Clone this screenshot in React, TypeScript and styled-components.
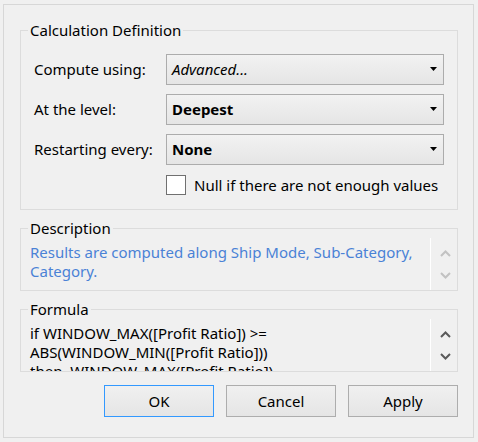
import styled, { createGlobalStyle } from "styled-components";

const GlobalStyle = createGlobalStyle`
  html, body {
    margin: 0;
    padding: 0;
    background: #f0f0f0;
  }
  body {
    font-family: "Noto Sans", "Open Sans", sans-serif;
    font-size: 15px;
    color: #000;
  }
`;

const Page = styled.div`
  width: 478px;
  height: 442px;
  padding: 4px 0 0 3px;
  box-sizing: border-box;
`;

const Dialog = styled.div`
  width: 471px;
  height: 434px;
  box-sizing: border-box;
  border: 1px solid #d7d7d7;
  padding: 15px 15px 0 16px;
  display: flex;
  flex-direction: column;
`;

const Group = styled.fieldset<{ $gap?: number }>`
  margin: ${(p) => p.$gap ?? 0}px 0 0 0;
  padding: 0;
  border: 1px solid #dcdcdc;
  min-width: 0;
`;

const Legend = styled.legend`
  margin-left: 7px;
  padding: 0 2px;
  font-size: 15px;
  line-height: 20px;
  color: #000;
`;

const CalcBody = styled.div`
  padding: 14px 13px 14px 13px;
  display: flex;
  flex-direction: column;
  gap: 10px;
`;

const Row = styled.div`
  display: flex;
  align-items: center;
  height: 30px;
`;

const Label = styled.div`
  width: 132px;
  flex: none;
`;

const Combo = styled.div<{ $bold?: boolean; $italic?: boolean }>`
  flex: 1;
  height: 31px;
  box-sizing: border-box;
  border: 1px solid #acacac;
  background: linear-gradient(#f2f2f2, #e5e5e5);
  display: flex;
  align-items: center;
  padding: 0 0 0 5px;
  font-weight: ${(p) => (p.$bold ? 700 : 400)};
  font-style: ${(p) => (p.$italic ? "italic" : "normal")};
`;

const ComboText = styled.span`
  flex: 1;
`;

const Arrow = styled.svg`
  width: 7px;
  height: 4px;
  margin-right: 6px;
`;

const CheckRow = styled.label`
  display: flex;
  align-items: center;
  gap: 8px;
  margin: 1px 0 0 132px;
`;

const Box = styled.span`
  width: 20px;
  height: 20px;
  box-sizing: border-box;
  border: 1px solid #707070;
  background: #fff;
`;

const TextArea = styled.div`
  display: flex;
  height: 52px;
  overflow: hidden;
`;

const AreaText = styled.div<{ $color: string; $top: number }>`
  flex: 1;
  padding: ${(p) => p.$top}px 6px 0 9px;
  line-height: 19px;
  color: ${(p) => p.$color};
  white-space: pre;
  overflow: hidden;
`;

const Scroll = styled.div<{ $color: string }>`
  width: 26px;
  flex: none;
  border-left: 1px solid #ffffff;
  display: flex;
  flex-direction: column;
  justify-content: center;
  align-items: center;
  gap: 15px;
  color: ${(p) => p.$color};
`;

const Chevron = styled.svg`
  width: 11px;
  height: 7px;
  margin-left: 2px;
`;

const Buttons = styled.div`
  display: flex;
  justify-content: flex-end;
  gap: 12px;
  margin-top: 13px;
`;

const Button = styled.button<{ $default?: boolean }>`
  width: 110px;
  height: 32px;
  box-sizing: border-box;
  border: 1px solid ${(p) => (p.$default ? "#3399ff" : "#adadad")};
  background: linear-gradient(#f0f0f0, #e5e5e5);
  font-family: inherit;
  font-size: 15px;
  color: #000;
  padding: 0;
`;

const DropArrow = () => (
  <Arrow viewBox="0 0 7 4">
    <path d="M0 0 H7 L3.5 4 Z" fill="#000" />
  </Arrow>
);

const ScrollArrows = ({ color }: { color: string }) => (
  <Scroll $color={color}>
    <Chevron viewBox="0 0 11 7">
      <path d="M1 6 L5.5 1.5 L10 6" fill="none" stroke="currentColor" strokeWidth="2" />
    </Chevron>
    <Chevron viewBox="0 0 11 7">
      <path d="M1 1 L5.5 5.5 L10 1" fill="none" stroke="currentColor" strokeWidth="2" />
    </Chevron>
  </Scroll>
);

const App = () => {
  return (
    <Page>
      <GlobalStyle />
      <Dialog>
        <Group>
          <Legend>Calculation Definition</Legend>
          <CalcBody>
            <Row>
              <Label>Compute using:</Label>
              <Combo $italic>
                <ComboText>Advanced...</ComboText>
                <DropArrow />
              </Combo>
            </Row>
            <Row>
              <Label>At the level:</Label>
              <Combo $bold>
                <ComboText>Deepest</ComboText>
                <DropArrow />
              </Combo>
            </Row>
            <Row>
              <Label>Restarting every:</Label>
              <Combo $bold>
                <ComboText>None</ComboText>
                <DropArrow />
              </Combo>
            </Row>
            <CheckRow>
              <Box />
              <span>Null if there are not enough values</span>
            </CheckRow>
          </CalcBody>
        </Group>

        <Group $gap={8}>
          <Legend>Description</Legend>
          <TextArea>
            <AreaText $color="#4a82d6" $top={5}>
              {"Results are computed along Ship Mode, Sub-Category,\nCategory."}
            </AreaText>
            <ScrollArrows color="#c2c2c2" />
          </TextArea>
        </Group>

        <Group $gap={8}>
          <Legend>Formula</Legend>
          <TextArea>
            <AreaText $color="#000" $top={5}>
              {"if WINDOW_MAX([Profit Ratio]) >=\nABS(WINDOW_MIN([Profit Ratio]))\nthen  WINDOW_MAX([Profit Ratio])"}
            </AreaText>
            <ScrollArrows color="#5a5a5a" />
          </TextArea>
        </Group>

        <Buttons>
          <Button $default>OK</Button>
          <Button>Cancel</Button>
          <Button>Apply</Button>
        </Buttons>
      </Dialog>
    </Page>
  );
};

export default App;
